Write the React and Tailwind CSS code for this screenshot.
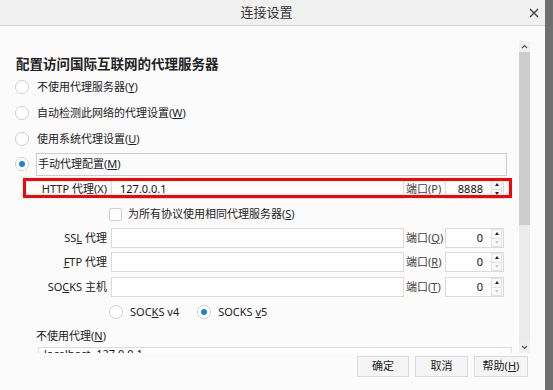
import React from 'react';

const font = { fontFamily: '"Noto Sans", "Noto Sans CJK SC", sans-serif' };

function Radio({ checked }) {
  return (
    <span className="w-[14px] h-[14px] rounded-full border border-[#cfcfcf] bg-white flex items-center justify-center shrink-0">
      {checked && <span className="w-[6px] h-[6px] rounded-full bg-[#1a86d0]" />}
    </span>
  );
}

function Spinner({ downOff }) {
  return (
    <div className="w-[11px] h-[18px] flex flex-col shrink-0 mr-[1px]">
      <div className="flex-1 flex items-center justify-center border border-[#e2e2e2] bg-[#fafafa]">
        <span className="w-0 h-0 border-l-[2px] border-r-[2px] border-b-[3px] border-l-transparent border-r-transparent border-b-[#222]" />
      </div>
      <div className="flex-1 flex items-center justify-center border border-t-0 border-[#e2e2e2] bg-[#fafafa]">
        <span className={'w-0 h-0 border-l-[2px] border-r-[2px] border-t-[3px] border-l-transparent border-r-transparent ' + (downOff ? 'border-t-[#cfcfcf]' : 'border-t-[#222]')} />
      </div>
    </div>
  );
}

function FieldRow({ label, value, port, portKey, portUnderline, downOff, className }) {
  return (
    <div className={'flex items-center h-[20px] ' + (className || '')}>
      <div className="w-[108px] text-right pr-[1px] whitespace-nowrap">{label}</div>
      <div className="ml-[3px] w-[293px] h-[20px] bg-white border border-[#dadada] flex items-center pl-[8px] text-[#111]">{value}</div>
      <div className="w-[41px] pl-[2px] whitespace-nowrap text-[#444]">
        端口({portUnderline ? <span className="underline">{portKey}</span> : portKey})
      </div>
      <div className="w-[59px] h-[20px] bg-white border border-[#dadada] flex items-center justify-end">
        <span className="mr-[8px] text-[#111]">{port}</span>
        <Spinner downOff={downOff} />
      </div>
    </div>
  );
}

export default function App() {
  return (
    <div className="w-[553px] h-[390px] flex bg-[#fbfbfb] text-[11px] text-[#222] overflow-hidden" style={font}>
      <div className="w-[545px] flex flex-col">
        {/* title bar */}
        <div className="h-[26px] bg-[#f0f0f0] border-b border-[#d3d3d3] flex items-center shrink-0">
          <div className="flex-1 text-center text-[13px] text-[#333] pl-[4px]">连接设置</div>
          <svg width="10" height="10" viewBox="0 0 10 10" className="mr-[6px]">
            <path d="M1 1 L9 9 M9 1 L1 9" stroke="#444" strokeWidth="1.4" />
          </svg>
        </div>

        <div className="flex mt-[15px] h-[312px] shrink-0">
          {/* scroll content */}
          <div className="w-[519px] overflow-hidden">
            <div className="mt-[13px] h-[20px] pl-[16px] flex items-center text-[13.5px] font-bold text-[#222]">配置访问国际互联网的代理服务器</div>

            <div className="h-[26px] flex items-center pl-[15px] gap-[8px]">
              <Radio /><span>不使用代理服务器(<span className="underline">Y</span>)</span>
            </div>
            <div className="h-[26px] flex items-center pl-[15px] gap-[8px]">
              <Radio /><span>自动检测此网络的代理设置(<span className="underline">W</span>)</span>
            </div>
            <div className="h-[26px] flex items-center pl-[15px] gap-[8px]">
              <Radio /><span>使用系统代理设置(<span className="underline">U</span>)</span>
            </div>
            <div className="h-[24px] flex items-center pl-[15px]">
              <Radio checked />
              <div className="ml-[7px] w-[471px] h-[23px] border border-[#cdcdcd] flex items-center pl-[1px]">
                手动代理配置(<span className="underline">M</span>)
              </div>
            </div>

            <div className="relative mt-[3px]">
              <FieldRow label="HTTP 代理(X)" value="127.0.0.1" port="8888" portKey="P" />
              <div className="absolute left-[23px] top-[-1px] w-[489px] h-[20px] border-[3px] border-[#ff0000]" />
            </div>

            <div className="mt-[4px] h-[22px] flex items-center pl-[109px] gap-[6px]">
              <span className="w-[13px] h-[13px] border border-[#cfcfcf] bg-white rounded-[2px]" />
              <span>为所有协议使用相同代理服务器(<span className="underline">S</span>)</span>
            </div>

            <FieldRow className="mt-[3px]" label={<>SS<span className="underline">L</span> 代理</>} value="" port="0" portKey="Q" portUnderline downOff />
            <FieldRow className="mt-[4px]" label={<><span className="underline">F</span>TP 代理</>} value="" port="0" portKey="R" portUnderline downOff />
            <FieldRow className="mt-[5px]" label={<>SO<span className="underline">C</span>KS 主机</>} value="" port="0" portKey="T" portUnderline downOff />

            <div className="mt-[5px] h-[20px] flex items-center pl-[109px]">
              <Radio />
              <span className="ml-[7px]">SOC<span className="underline">K</span>S v4</span>
              <span className="ml-[18px]"><Radio checked /></span>
              <span className="ml-[7px]">SOCKS <span className="underline">v</span>5</span>
            </div>

            <div className="mt-[5px] h-[18px] flex items-center pl-[36px]">
              不使用代理(<span className="underline">N</span>)
            </div>
            <div className="mt-[2px] ml-[38px] w-[474px] h-[40px] bg-white border border-[#dcdcdc] pl-[5px] leading-[12px] text-[#111]">
              localhost, 127.0.0.1
            </div>
          </div>

          {/* scrollbar */}
          <div className="w-[11px] flex flex-col bg-[#ececec]">
            <div className="h-[11px] bg-[#f0f0f0] flex items-center justify-center">
              <svg width="7" height="5" viewBox="0 0 7 5"><path d="M1 4 L3.5 1.5 L6 4" fill="none" stroke="#555" strokeWidth="1.2" /></svg>
            </div>
            <div className="h-[173px] bg-[#cdcdcd]" />
            <div className="flex-1" />
            <div className="h-[11px] bg-[#f0f0f0] flex items-center justify-center">
              <svg width="7" height="5" viewBox="0 0 7 5"><path d="M1 1 L3.5 3.5 L6 1" fill="none" stroke="#555" strokeWidth="1.2" /></svg>
            </div>
          </div>
        </div>

        {/* buttons */}
        <div className="flex justify-end gap-[6px] pr-[17px] pt-[3px]">
          <button className="w-[52px] h-[21px] border border-[#dadada] bg-[#f5f5f5] text-[11px] text-[#222]">确定</button>
          <button className="w-[53px] h-[21px] border border-[#dadada] bg-[#f5f5f5] text-[11px] text-[#222]">取消</button>
          <button className="w-[54px] h-[21px] border border-[#dadada] bg-[#f5f5f5] text-[11px] text-[#222]">帮助(<span className="underline">H</span>)</button>
        </div>
      </div>
      <div className="w-[8px] h-full bg-[#6f6f6f]" />
    </div>
  );
}
